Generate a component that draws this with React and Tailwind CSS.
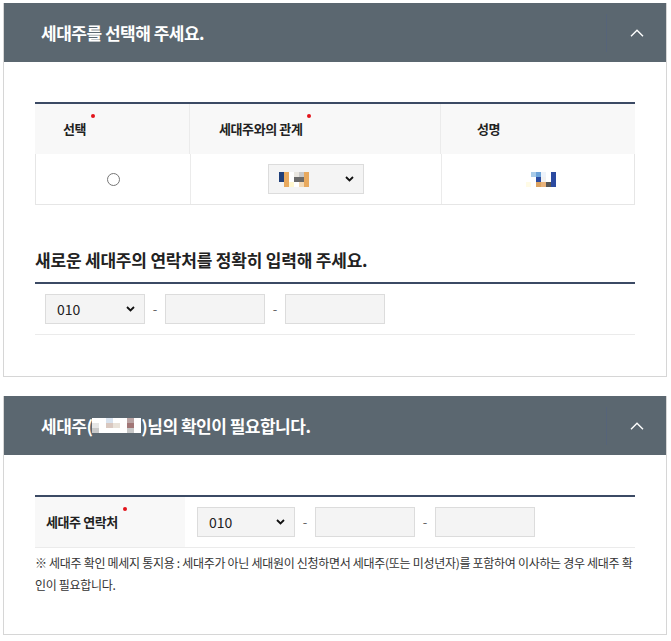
import React from 'react';

const FONT = { fontFamily: '"Noto Sans CJK KR", "Noto Sans", sans-serif' };

function RedDot() {
    return <span className="absolute -right-[9px] -top-[5px] h-[4px] w-[4px] rounded-full bg-[#e3131b]"></span>;
}

function Chevron() {
    return (
        <svg width="14" height="8" viewBox="0 0 14 8" fill="none">
            <path d="M1 7.2 7 1.2l6 6" stroke="#fff" strokeWidth="1.4" />
        </svg>
    );
}

function PanelHeader({ children }) {
    return (
        <div className="flex h-[59px] items-center bg-[#5b6770]">
            <h2 className="flex flex-1 items-center pl-[37px] text-[17px] font-bold tracking-[-0.5px] text-white">
                {children}
            </h2>
            <div className="h-[38px] w-px bg-[#566479]"></div>
            <button className="flex h-full w-[59px] items-center justify-center">
                <Chevron />
            </button>
        </div>
    );
}

function Select({ width = 'w-[100px]', children }) {
    return (
        <div className={`relative flex h-[30px] ${width} items-center border border-[#dcdcdc] bg-[#f4f4f4] pl-[11px] text-[14px] text-[#222]`}>
            {children}
            <svg className="absolute right-[9px] top-[11px]" width="9" height="6" viewBox="0 0 9 6" fill="none">
                <path d="M1 1l3.5 3.5L8 1" stroke="#111" strokeWidth="1.8" />
            </svg>
        </div>
    );
}

function PhoneInputs() {
    return (
        <>
            <span className="w-[20px] text-center text-[13px] text-[#666]">-</span>
            <div className="h-[30px] w-[100px] border border-[#dcdcdc] bg-[#f4f4f4]"></div>
            <span className="w-[20px] text-center text-[13px] text-[#666]">-</span>
            <div className="h-[30px] w-[100px] border border-[#dcdcdc] bg-[#f4f4f4]"></div>
        </>
    );
}

// mosaic blocks standing in for masked personal data
function Mosaic({ cells, size = 'w-[5px]' }) {
    return (
        <span className="inline-flex flex-col">
            {cells.map((row, i) => (
                <span key={i} className="flex">
                    {row.map((c, j) => (
                        <span key={j} className={`h-[5px] ${size}`} style={{ background: c }}></span>
                    ))}
                </span>
            ))}
        </span>
    );
}

export default function App() {
    return (
        <div className="min-h-[641px] bg-white p-[3px] pr-[4px] text-[#222]" style={FONT}>
            {/* 세대주 선택 */}
            <section className="border border-[#d6d6d6] border-t-0">
                <PanelHeader>세대주를 선택해 주세요.</PanelHeader>
                <div className="px-[31px] pb-[41px] pt-[40px]">
                    <div className="border-t-2 border-[#3b4a64]">
                        <div className="grid grid-cols-[155px_251px_1fr] text-[13px] font-bold tracking-[-0.4px]">
                            <div className="flex h-[50px] items-center border-r border-[#ebebeb] bg-[#f8f8f8] pl-[28px]">
                                <span className="relative">선택<RedDot /></span>
                            </div>
                            <div className="flex h-[50px] items-center border-r border-[#ebebeb] bg-[#f8f8f8] pl-[29px]">
                                <span className="relative">세대주와의 관계<RedDot /></span>
                            </div>
                            <div className="flex h-[50px] items-center bg-[#f8f8f8] pl-[36px]">성명</div>
                        </div>
                        <div className="grid grid-cols-[155px_251px_1fr] border-x border-b border-[#e6e6e6]">
                            <div className="flex h-[50px] items-center justify-center border-r border-[#ebebeb]">
                                <span className="h-[13px] w-[13px] rounded-full border border-[#767676] bg-white"></span>
                            </div>
                            <div className="flex h-[50px] items-center justify-center border-r border-[#ebebeb]">
                                <div className="relative flex h-[30px] w-[96px] items-center border border-[#dcdcdc] bg-[#f4f4f4] pl-[10px]">
                                    <Mosaic cells={[
                                        ['#1f3f7a', '#e8a95e', '#fff', '#e9e6e0', '#c9c9c9', '#e8a95e'],
                                        ['#1f3f7a', '#e8a95e', '#fff', '#6a6a6a', '#6a6a6a', '#e8a95e'],
                                        ['#f4f4f4', '#e8a95e', '#fff7cf', '#fff', '#f3d9b5', '#e8a95e'],
                                    ]} />
                                    <svg className="absolute right-[9px] top-[11px]" width="9" height="6" viewBox="0 0 9 6" fill="none">
                                        <path d="M1 1l3.5 3.5L8 1" stroke="#111" strokeWidth="1.8" />
                                    </svg>
                                </div>
                            </div>
                            <div className="flex h-[50px] items-center justify-center pl-[6px]">
                                <Mosaic cells={[
                                    ['#fff', '#a9cbe8', '#6da3d9', '#eef3fa', '#fff', '#2b4aa0'],
                                    ['#fff', '#fff', '#2b4aa0', '#f1f1f1', '#fff', '#2b4aa0'],
                                    ['#fffbe6', '#fff', '#dba260', '#e8b27a', '#555', '#2b4aa0'],
                                ]} />
                            </div>
                        </div>
                    </div>

                    <h3 className="mt-[43px] pb-[10px] text-[17px] font-bold leading-[24px] tracking-[-0.2px] text-[#222]">
                        새로운 세대주의 연락처를 정확히 입력해 주세요.
                    </h3>
                    <div className="flex items-center border-b border-t-2 border-b-[#ebebeb] border-t-[#3b4a64] py-[10px] pl-[10px]">
                        <Select>010</Select>
                        <PhoneInputs />
                    </div>
                </div>
            </section>

            {/* 세대주 확인 */}
            <section className="mt-[19px] border border-[#d6d6d6] border-t-0">
                <PanelHeader>
                    세대주(
                    <Mosaic size="w-[7px]" cells={[
                        ['#fff', '#fff', '#d8e2ee', '#fff', '#fff', '#b9a3a3', '#fff'],
                        ['#e6e6e6', '#fff', '#d9c8c0', '#e9e2d9', '#fff', '#a17676', '#fff'],
                        ['#c8c8c8', '#fff', '#fff', '#fff', '#fff', '#c8c8c8', '#fff'],
                    ]} />
                    )님의 확인이 필요합니다.
                </PanelHeader>
                <div className="px-[31px] pb-[38px] pt-[40px]">
                    <div className="flex border-b border-t-2 border-b-[#ebebeb] border-t-[#3b4a64]">
                        <div className="flex h-[50px] w-[150px] items-center bg-[#f8f8f8] pl-[11px] text-[13px] font-bold tracking-[-0.4px]">
                            <span className="relative">세대주 연락처<RedDot /></span>
                        </div>
                        <div className="flex items-center pl-[12px]">
                            <Select width="w-[98px]">010</Select>
                            <PhoneInputs />
                        </div>
                    </div>
                    <p className="break-all pt-[4px] text-[12px] leading-[22px] tracking-[-0.3px] text-[#333]">
                        ※ 세대주 확인 메세지 통지용 : 세대주가 아닌 세대원이 신청하면서 세대주(또는 미성년자)를 포함하여 이사하는 경우 세대주 확인이 필요합니다.
                    </p>
                </div>
            </section>
        </div>
    );
}
